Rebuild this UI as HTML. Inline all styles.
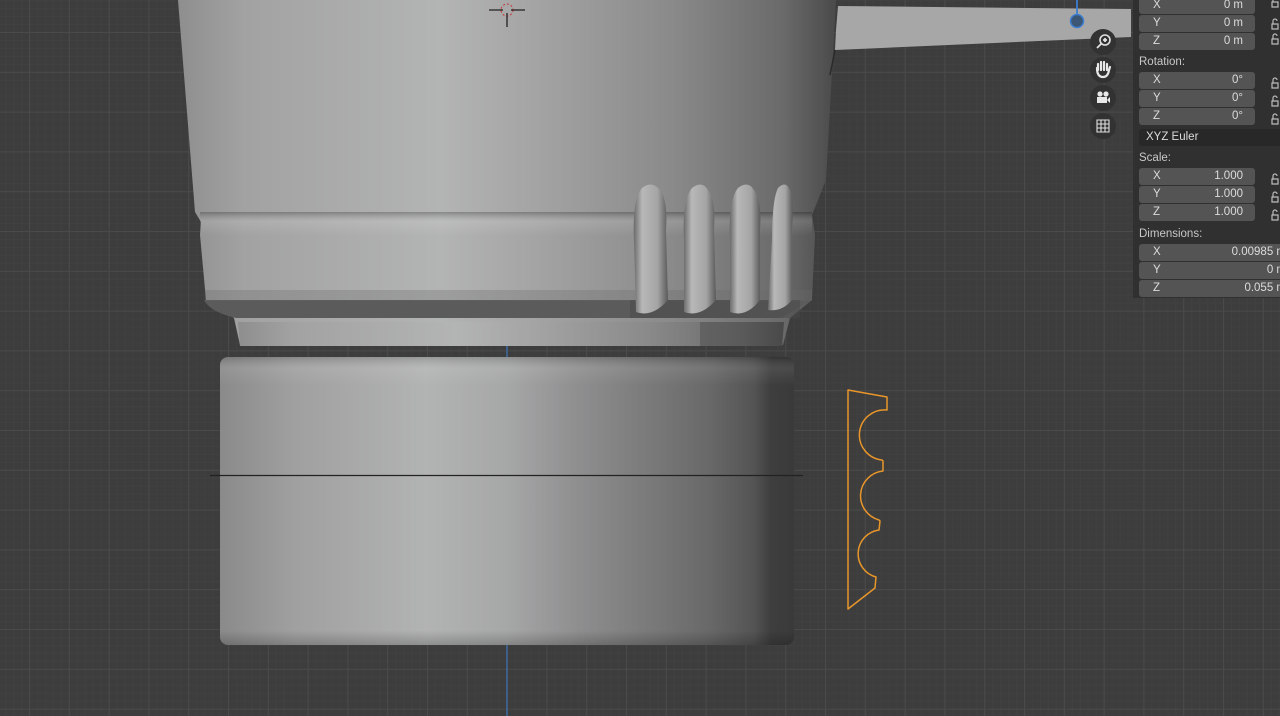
<!DOCTYPE html>
<html><head><meta charset="utf-8"><style>
body{margin:0;width:1280px;height:716px;overflow:hidden;background:#3d3d3d;font-family:"Liberation Sans",sans-serif;}
svg{position:absolute;left:0;top:0}
.panel{position:absolute;left:1133px;top:0;width:147px;height:298px;background:#303030;}
.lbl{position:absolute;left:6px;font-size:11.5px;color:#c8c8c8}
.f{position:absolute;left:6px;width:116px;height:17px;background:#545454;border-radius:3px;font-size:11.5px;color:#dcdcdc;line-height:17px}
.f .a{position:absolute;left:14px}
.f .v{position:absolute;right:12px}
.f2{width:150px}
.lk{position:absolute;left:137px;font-size:12px;color:#bbb}
.ic{position:absolute;left:1090px;width:26px;height:26px;border-radius:13px;background:#323232;}
</style></head><body>
<svg width="1280" height="716" viewBox="0 0 1280 716">
<defs>
<pattern id="gm" width="7.96" height="7.96" patternUnits="userSpaceOnUse" x="29" y="32"><path d="M0 0.5H8M0.5 0V8" stroke="#404040" stroke-width="1"/></pattern>
<pattern id="g" width="39.8" height="39.8" patternUnits="userSpaceOnUse" x="29" y="32"><path d="M0 0.5H39.8M0.5 0V39.8" stroke="#4a4a4a" stroke-width="1"/></pattern>
<linearGradient id="cyl" x1="0" x2="1">
<stop offset="0" stop-color="#8a8a8a"/><stop offset="0.13" stop-color="#a0a0a0"/><stop offset="0.36" stop-color="#b2b3b3"/><stop offset="0.5" stop-color="#a6a7a7"/><stop offset="0.62" stop-color="#8f8f90"/><stop offset="0.85" stop-color="#696969"/><stop offset="0.93" stop-color="#545454"/><stop offset="0.96" stop-color="#3e3e3e"/><stop offset="1" stop-color="#3a3a3a"/>
</linearGradient>
<linearGradient id="cylv" x1="0" y1="0" x2="0" y2="1">
<stop offset="0" stop-color="#000" stop-opacity="0.15"/><stop offset="0.04" stop-color="#fff" stop-opacity="0.08"/><stop offset="0.1" stop-color="#fff" stop-opacity="0"/><stop offset="0.95" stop-color="#000" stop-opacity="0"/><stop offset="1" stop-color="#000" stop-opacity="0.2"/>
</linearGradient>
<linearGradient id="cup" x1="0" x2="1">
<stop offset="0" stop-color="#8e8e8e"/><stop offset="0.1" stop-color="#a2a2a2"/><stop offset="0.4" stop-color="#b3b4b4"/><stop offset="0.55" stop-color="#a3a3a3"/><stop offset="0.75" stop-color="#8a8a8a"/><stop offset="0.92" stop-color="#6a6a6a"/><stop offset="1" stop-color="#4a4a4a"/>
</linearGradient>
<linearGradient id="rid" x1="0" x2="1"><stop offset="0" stop-color="#6a6a6a"/><stop offset="0.25" stop-color="#b8b8b8"/><stop offset="0.7" stop-color="#a4a4a4"/><stop offset="1" stop-color="#5a5a5a"/></linearGradient>
<linearGradient id="grv" x1="0" y1="0" x2="0" y2="1"><stop offset="0" stop-color="#000" stop-opacity="0.25"/><stop offset="0.4" stop-color="#fff" stop-opacity="0.12"/><stop offset="1" stop-color="#fff" stop-opacity="0"/></linearGradient>
</defs>
<rect width="1280" height="716" fill="#3d3d3d"/>
<rect width="1280" height="716" fill="url(#gm)"/>
<rect width="1280" height="716" fill="url(#g)"/>
<line x1="507" y1="340" x2="507" y2="716" stroke="#3d6aa0" stroke-width="1.5"/>
<!-- upper cup -->
<path d="M178 0H836L826 180L812 215L815 235L812 300L790 318L783 345H240L234 318L206 300L200 235L201 222L195 212Z" fill="url(#cup)"/>
<path d="M204 300Q210 312 236 318L782 318L810 300Z" fill="#5b5b5b"/>
<path d="M238 322H784L782 346H240Z" fill="url(#cup)"/>
<path d="M700 322H784L782 346H700Z" fill="#4a4a4a" opacity="0.45"/>
<rect x="200" y="212" width="612" height="24" fill="url(#grv)"/>
<path d="M205 290L812 290L812 301L205 301Z" fill="#6a6a6a" opacity="0.3"/>
<!-- ridge shadows -->
<path d="M630 300L800 300L800 318L630 318Z" fill="#4a4a4a" opacity="0.5"/>
<g>
<path d="M642 188Q652 180 660 190Q668 200 666 230L668 300Q652 318 636 312L634 240Q632 200 642 188Z" fill="url(#rid)"/>
<path d="M692 188Q702 180 708 190Q716 200 714 230L716 300Q700 318 684 312L684 240Q682 200 692 188Z" fill="url(#rid)"/>
<path d="M738 188Q748 180 754 190Q762 200 760 230L760 300Q746 318 730 312L730 240Q728 200 738 188Z" fill="url(#rid)"/>
<path d="M778 188Q786 180 790 190Q794 200 792 230L792 300Q782 312 768 310L772 240Q772 200 778 188Z" fill="url(#rid)"/>
</g>
<circle cx="507" cy="10" r="6" fill="none" stroke="#c33" stroke-width="1" stroke-dasharray="2 2"/>
<path d="M489 10H503M511 10H525M507 13V27" stroke="#222" stroke-width="1.3"/>
<!-- lower cylinder -->
<rect x="220" y="357" width="574" height="288" rx="8" fill="url(#cyl)"/>
<rect x="220" y="357" width="574" height="288" rx="8" fill="url(#cylv)"/>
<line x1="210" y1="475.5" x2="803" y2="475.5" stroke="#222" stroke-width="1.2"/>
<path d="M848 390L887 397L887 410A25 25 0 0 0 882 460L883 461L883 471A25 25 0 0 0 879 520L880 521L879 530A24 24 0 0 0 876 577L875 588L848 609Z" fill="none" stroke="#e8962a" stroke-width="1.5" stroke-linejoin="round"/>
<path d="M838 6L1131 9L1131 37L835 50L836 30Z" fill="#a7a7a7"/>
<path d="M835 50L830 75" stroke="#2a2a2a" stroke-width="1.5"/>
<line x1="1077" y1="0" x2="1077" y2="20" stroke="#3d7ed0" stroke-width="1.8"/>
<circle cx="1077" cy="21" r="6.5" fill="#3b5775" stroke="#3d7ed0" stroke-width="1.5"/>
<!-- nav icons -->
<circle cx="1103" cy="42" r="13" fill="#323232"/>
<circle cx="1105" cy="40" r="5" fill="none" stroke="#e0e0e0" stroke-width="1.6"/>
<path d="M1103 40H1107M1105 38V42M1101.5 43.5L1097 48" stroke="#e0e0e0" stroke-width="1.8"/>
<circle cx="1103" cy="70" r="13" fill="#323232"/>
<path d="M1098 70V64M1101 70V62M1104 70V62M1107 70V64M1097 68Q1097 77 1103 77Q1108 77 1109 70L1110 67" stroke="#e8e8e8" stroke-width="2.2" fill="none" stroke-linecap="round"/>
<circle cx="1103" cy="98" r="13" fill="#323232"/>
<circle cx="1100" cy="94" r="2.6" fill="#e8e8e8"/><circle cx="1106" cy="94" r="2.6" fill="#e8e8e8"/>
<rect x="1097" y="97" width="10" height="6" fill="#e8e8e8"/><path d="M1107 100L1110 97V103Z" fill="#e8e8e8"/>
<circle cx="1103" cy="126" r="13" fill="#323232"/>
<path d="M1097 120H1109V132H1097ZM1097 124H1109M1097 128H1109M1101 120V132M1105 120V132" stroke="#e0e0e0" stroke-width="1.1" fill="none"/>
</svg>
<div class="panel">
<div class="f" style="top:-3px"><span class="a">X</span><span class="v">0 m</span></div>
<div class="f" style="top:15px"><span class="a">Y</span><span class="v">0 m</span></div>
<div class="f" style="top:33px"><span class="a">Z</span><span class="v">0 m</span></div>
<div class="lbl" style="top:56px">Rotation:</div>
<div class="f" style="top:72px"><span class="a">X</span><span class="v">0°</span></div>
<div class="f" style="top:90px"><span class="a">Y</span><span class="v">0°</span></div>
<div class="f" style="top:108px"><span class="a">Z</span><span class="v">0°</span></div>
<div class="f f2" style="top:129px;background:#282828;border-radius:3px 0 0 3px"><span style="position:absolute;left:7px">XYZ Euler</span></div>
<div class="lbl" style="top:152px">Scale:</div>
<div class="f" style="top:168px"><span class="a">X</span><span class="v">1.000</span></div>
<div class="f" style="top:186px"><span class="a">Y</span><span class="v">1.000</span></div>
<div class="f" style="top:204px"><span class="a">Z</span><span class="v">1.000</span></div>
<div class="lbl" style="top:228px">Dimensions:</div>
<div class="f f2" style="top:244px"><span class="a">X</span><span class="v" style="right:3px">0.00985 m</span></div>
<div class="f f2" style="top:262px"><span class="a">Y</span><span class="v" style="right:3px">0 m</span></div>
<div class="f f2" style="top:280px"><span class="a">Z</span><span class="v" style="right:3px">0.055 m</span></div>
</div>
<svg width="1280" height="716" style="pointer-events:none">
<g stroke="#bbb" stroke-width="1.2" fill="none">
<path d="M1272 2h6v5h-6zM1273 2v-3a2 2 0 0 1 4 0"/>
<path d="M1272 39h6v5h-6zM1273 39v-3a2 2 0 0 1 4 0"/>
<path d="M1272 83h6v5h-6zM1273 83v-3a2 2 0 0 1 4 0"/>
<path d="M1272 101h6v5h-6zM1273 101v-3a2 2 0 0 1 4 0"/>
<path d="M1272 119h6v5h-6zM1273 119v-3a2 2 0 0 1 4 0"/>
<path d="M1272 179h6v5h-6zM1273 179v-3a2 2 0 0 1 4 0"/>
<path d="M1272 197h6v5h-6zM1273 197v-3a2 2 0 0 1 4 0"/>
<path d="M1272 215h6v5h-6zM1273 215v-3a2 2 0 0 1 4 0"/>
<path d="M1272 24h6v5h-6zM1273 24v-3a2 2 0 0 1 4 0"/>
</g>
</svg>
</body></html>
